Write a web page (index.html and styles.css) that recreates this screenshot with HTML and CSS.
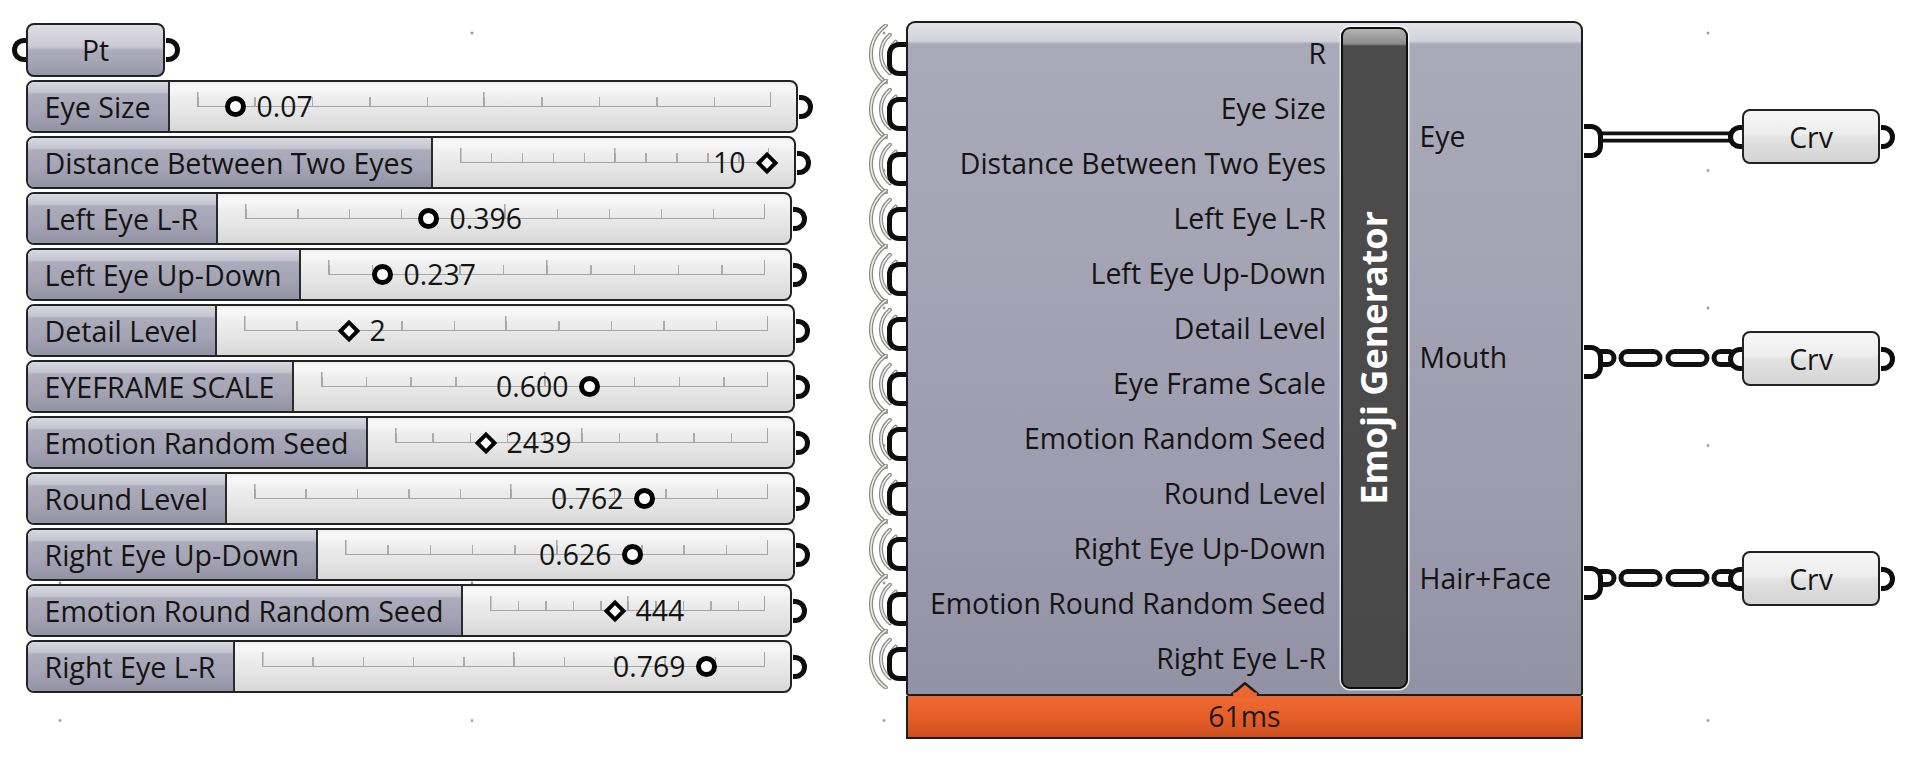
FILE: index.html
```html
<!DOCTYPE html>
<html>
<head>
<meta charset="utf-8">
<title>Emoji Generator</title>
<link rel="stylesheet" href="styles.css">
</head>
<body>
<svg class="defs" aria-hidden="true">
  <symbol id="wv" viewBox="0 0 42 60">
    <g fill="none" stroke-linecap="round">
      <path d="M19.9 1.3 A35 35 0 0 0 19.9 58.7 M23.9 10.8 A25 25 0 0 0 23.9 49.2 M29.7 17.7 A16 16 0 0 0 29.7 42.3" stroke="#8a8883" stroke-width="4"/>
      <path d="M19.9 1.3 A35 35 0 0 0 19.9 58.7 M23.9 10.8 A25 25 0 0 0 23.9 49.2 M29.7 17.7 A16 16 0 0 0 29.7 42.3" stroke="#efeee9" stroke-width="1.6"/>
    </g>
  </symbol>
</svg>
<div class="canvas">
  <div class="params">
    <div class="pt-node"><span class="port port-in"></span>Pt<span class="port port-out"></span></div>

    <div class="slider len-a"><div class="s-label">Eye Size</div><div class="s-rail"><div class="track"></div></div>
      <div class="thumb" style="left:207.5px"><span class="knob round"></span><span class="val after">0.07</span></div><span class="port port-out"></span></div>

    <div class="slider len-b"><div class="s-label">Distance Between Two Eyes</div><div class="s-rail"><div class="track"></div></div>
      <div class="thumb" style="left:738.5px"><span class="knob diamond"></span><span class="val before">10</span></div><span class="port port-out"></span></div>

    <div class="slider len-c"><div class="s-label">Left Eye L-R</div><div class="s-rail"><div class="track"></div></div>
      <div class="thumb" style="left:400.5px"><span class="knob round"></span><span class="val after">0.396</span></div><span class="port port-out"></span></div>

    <div class="slider len-c"><div class="s-label">Left Eye Up-Down</div><div class="s-rail"><div class="track"></div></div>
      <div class="thumb" style="left:354.5px"><span class="knob round"></span><span class="val after">0.237</span></div><span class="port port-out"></span></div>

    <div class="slider len-d"><div class="s-label">Detail Level</div><div class="s-rail"><div class="track"></div></div>
      <div class="thumb" style="left:320.5px"><span class="knob diamond"></span><span class="val after">2</span></div><span class="port port-out"></span></div>

    <div class="slider len-d"><div class="s-label">EYEFRAME SCALE</div><div class="s-rail"><div class="track"></div></div>
      <div class="thumb" style="left:561.5px"><span class="knob round"></span><span class="val before">0.600</span></div><span class="port port-out"></span></div>

    <div class="slider len-d"><div class="s-label">Emotion Random Seed</div><div class="s-rail"><div class="track"></div></div>
      <div class="thumb" style="left:457.5px"><span class="knob diamond"></span><span class="val after">2439</span></div><span class="port port-out"></span></div>

    <div class="slider len-d"><div class="s-label">Round Level</div><div class="s-rail"><div class="track"></div></div>
      <div class="thumb" style="left:616.5px"><span class="knob round"></span><span class="val before">0.762</span></div><span class="port port-out"></span></div>

    <div class="slider len-d"><div class="s-label">Right Eye Up-Down</div><div class="s-rail"><div class="track"></div></div>
      <div class="thumb" style="left:604.5px"><span class="knob round"></span><span class="val before">0.626</span></div><span class="port port-out"></span></div>

    <div class="slider len-c"><div class="s-label">Emotion Round Random Seed</div><div class="s-rail"><div class="track"></div></div>
      <div class="thumb" style="left:586.5px"><span class="knob diamond"></span><span class="val after">444</span></div><span class="port port-out"></span></div>

    <div class="slider len-c"><div class="s-label">Right Eye L-R</div><div class="s-rail"><div class="track"></div></div>
      <div class="thumb" style="left:678.5px"><span class="knob round"></span><span class="val before">0.769</span></div><span class="port port-out"></span></div>
  </div>

  <div class="component">
    <div class="comp-body">
      <div class="inputs">
        <div class="in"><svg class="waves"><use href="#wv"/></svg>R</div>
        <div class="in"><svg class="waves"><use href="#wv"/></svg>Eye Size</div>
        <div class="in"><svg class="waves"><use href="#wv"/></svg>Distance Between Two Eyes</div>
        <div class="in"><svg class="waves"><use href="#wv"/></svg>Left Eye L-R</div>
        <div class="in"><svg class="waves"><use href="#wv"/></svg>Left Eye Up-Down</div>
        <div class="in"><svg class="waves"><use href="#wv"/></svg>Detail Level</div>
        <div class="in"><svg class="waves"><use href="#wv"/></svg>Eye Frame Scale</div>
        <div class="in"><svg class="waves"><use href="#wv"/></svg>Emotion Random Seed</div>
        <div class="in"><svg class="waves"><use href="#wv"/></svg>Round Level</div>
        <div class="in"><svg class="waves"><use href="#wv"/></svg>Right Eye Up-Down</div>
        <div class="in"><svg class="waves"><use href="#wv"/></svg>Emotion Round Random Seed</div>
        <div class="in"><svg class="waves"><use href="#wv"/></svg>Right Eye L-R</div>
      </div>
      <div class="title-bar"><span class="title-text">Emoji Generator</span></div>
      <div class="outputs">
        <div class="out">Eye</div>
        <div class="out">Mouth</div>
        <div class="out">Hair+Face</div>
      </div>
    </div>
    <div class="timing">
      <svg class="notch" viewBox="0 0 28 16"><polygon points="0,12.75 14,1.2 28,12.75" fill="#ec6631" stroke="#1c1c1c" stroke-width="2.5" stroke-linejoin="miter"/><rect x="2.2" y="10.6" width="23.6" height="5.4" fill="#ec6631"/></svg>
      61ms
    </div>
  </div>

  <svg class="wires" viewBox="1583 0 160 765">
    <line x1="1592" y1="137" x2="1736" y2="137" stroke="#111" stroke-width="11"/>
    <line x1="1590" y1="137" x2="1738" y2="137" stroke="#fff" stroke-width="3.4"/>
    <g fill="#fff" stroke="#111" stroke-width="5">
      <rect x="1592" y="351.5" width="22" height="13" rx="6.5"/>
      <rect x="1621" y="351.5" width="39" height="13" rx="6.5"/>
      <rect x="1668" y="351.5" width="39" height="13" rx="6.5"/>
      <rect x="1714" y="351.5" width="22" height="13" rx="6.5"/>
      <rect x="1592" y="571.5" width="22" height="13" rx="6.5"/>
      <rect x="1621" y="571.5" width="39" height="13" rx="6.5"/>
      <rect x="1668" y="571.5" width="39" height="13" rx="6.5"/>
      <rect x="1714" y="571.5" width="22" height="13" rx="6.5"/>
    </g>
  </svg>

  <div class="crv crv-eye"><span class="port port-in"></span>Crv<span class="port port-out"></span></div>
  <div class="crv crv-mouth"><span class="port port-in"></span>Crv<span class="port port-out"></span></div>
  <div class="crv crv-hair"><span class="port port-in"></span>Crv<span class="port port-out"></span></div>
</div>
</body>
</html>
```

FILE: styles.css
```css
* { box-sizing: border-box; }
html, body { margin: 0; padding: 0; }
body {
  width: 1920px;
  height: 765px;
  overflow: hidden;
  background-color: #fff;
  background-image: radial-gradient(circle, #9a9a9a 0 1.3px, transparent 1.7px);
  background-size: 412px 137.5px;
  background-position: -146px -35.75px;
  font-family: "Open Sans", "Noto Sans", sans-serif;
  font-size: 28.4px;
  color: #141414;
}
.defs { position: absolute; width: 0; height: 0; overflow: hidden; }
.canvas { position: relative; width: 1920px; height: 765px; }

/* ports */
.port {
  position: absolute;
  top: 50%;
  width: 14px;
  height: 24px;
  margin-top: -12px;
  border: 5px solid #0d0d0d;
  background: #fff;
  z-index: 2;
}
.port-out { left: calc(100% + 2.5px); border-left: 0; border-radius: 0 12px 12px 0; }
.port-in { right: calc(100% + 2.5px); border-right: 0; border-radius: 12px 0 0 12px; }

/* left column of parameters */
.params {
  position: absolute;
  left: 26px;
  top: 23px;
  display: flex;
  flex-direction: column;
  align-items: flex-start;
  gap: 3px;
}
.pt-node {
  position: relative;
  width: 139px;
  height: 54px;
  border: 2.5px solid #222;
  border-radius: 8px;
  display: flex;
  align-items: center;
  justify-content: center;
  background: linear-gradient(#dedee6 0%, #c9c8d4 44%, #aeadbd 50%, #a3a2b3 80%, #9897a9 100%);
}

.slider {
  position: relative;
  display: flex;
  height: 53px;
  border: 2.5px solid #232323;
  border-radius: 8px;
  background: linear-gradient(#eeeeee 0%, #f8f8f8 10%, #ededed 35%, #e6e6e6 60%, #d8d8d8 100%);
}
.len-a { width: 772px; }
.len-b { width: 770px; }
.len-c { width: 766px; }
.len-d { width: 769px; }

.s-label {
  display: flex;
  align-items: center;
  padding: 0 17.5px 0 16.5px;
  border-right: 2.5px solid #2b2b2b;
  border-radius: 6px 0 0 6px;
  white-space: nowrap;
  font-size: 28.6px;
  background: linear-gradient(#d8d8e1 0%, #c6c5d1 20%, #acabbb 26%, #a5a4b5 60%, #9392a5 100%);
}
.s-rail { flex: 1; position: relative; }
.track {
  position: absolute;
  left: 27px;
  right: 25px;
  top: 10px;
  height: 15px;
  background:
    linear-gradient(#a6a6a6, #a6a6a6) left bottom / 100% 1.5px no-repeat,
    linear-gradient(#a6a6a6, #a6a6a6) left bottom / 1.5px 15px no-repeat,
    linear-gradient(#a6a6a6, #a6a6a6) 50% bottom / 1.5px 15px no-repeat,
    linear-gradient(#a6a6a6, #a6a6a6) right bottom / 1.5px 15px no-repeat,
    repeating-linear-gradient(90deg, #acacac 0 1.5px, transparent 1.5px 10%) left bottom / 100% 10px no-repeat;
}
.thumb { position: absolute; top: 50%; width: 0; height: 0; }
.knob { position: absolute; background: #fff; }
.knob.round {
  width: 21px; height: 21px; left: -10.5px; top: -10.5px;
  border: 5.5px solid #000; border-radius: 50%;
}
.knob.diamond {
  width: 16px; height: 16px; left: -8px; top: -8px;
  border: 4px solid #000; transform: rotate(45deg);
}
.val {
  position: absolute;
  top: 0;
  line-height: 1;
  transform: translateY(-53%);
  white-space: nowrap;
}
.val.after { left: 21px; }
.val.before { right: 21px; }

/* main component */
.component { position: absolute; left: 906px; top: 21px; width: 677px; }
.comp-body {
  position: relative;
  height: 675px;
  display: flex;
  border: 2.5px solid #1c1c1c;
  border-radius: 9px 9px 3px 3px;
  background: linear-gradient(#e2e2e8 0px, #d2d2da 18px, #aaa9b9 21px, #a6a5b6 30%, #9c9bae 75%, #9392a5 100%);
}
.inputs {
  width: 430px;
  padding: 3px 12px 0 0;
  display: flex;
  flex-direction: column;
  text-align: right;
}
.in { position: relative; height: 55px; line-height: 55px; white-space: nowrap; }
.in::before {
  content: "";
  position: absolute;
  top: 50%;
  right: calc(100% + 2.5px);
  width: 14px;
  height: 24px;
  margin-top: -12px;
  border: 5px solid #0d0d0d;
  border-right: 0;
  border-radius: 12px 0 0 12px;
  background: #fff;
  z-index: 2;
}
.waves {
  position: absolute;
  left: -42.5px;
  top: -2.5px;
  width: 42px;
  height: 60px;
  overflow: visible;
}
.title-bar {
  width: 67px;
  margin: 3.5px 0 5px 2.5px;
  border: 2.5px solid #0e0e0e;
  border-radius: 9px;
  box-shadow: 0 0 0 1.5px rgba(255,255,255,0.75);
  background: linear-gradient(#b4b4b4 0px, #8c8c8c 15px, #4c4c4c 17px, #494949 100%);
  display: flex;
  align-items: center;
  justify-content: center;
}
.title-text {
  writing-mode: vertical-rl;
  transform: rotate(180deg);
  color: #fff;
  font-weight: 700;
  font-size: 36px;
  white-space: nowrap;
  line-height: 1;
}
.outputs {
  flex: 1;
  display: flex;
  flex-direction: column;
  padding: 3px 0 5.5px;
}
.out {
  position: relative;
  flex: 1;
  display: flex;
  align-items: center;
  padding-left: 12px;
}
.out::after {
  content: "";
  position: absolute;
  top: 50%;
  left: calc(100% + 2.5px);
  width: 14px;
  height: 24px;
  margin-top: -12px;
  border: 5px solid #0d0d0d;
  border-left: 0;
  border-radius: 0 12px 12px 0;
  background: #fff;
  z-index: 2;
}
.timing {
  position: relative;
  height: 43px;
  border: 2.5px solid #1c1c1c;
  border-top: 0;
  background: linear-gradient(#ef6b33 0%, #e65e2a 50%, #cf4f1f 100%);
  text-align: center;
  line-height: 40px;
  color: #1a1a1a;
}
.notch {
  position: absolute;
  left: 50%;
  top: -14px;
  width: 28px;
  height: 16px;
  margin-left: -14px;
}

/* wires */
.wires { position: absolute; left: 1583px; top: 0; width: 160px; height: 765px; }

/* Crv nodes */
.crv {
  position: absolute;
  left: 1742px;
  width: 138px;
  height: 55px;
  border: 2.5px solid #222;
  border-radius: 8px;
  display: flex;
  align-items: center;
  justify-content: center;
  background: linear-gradient(#f6f6f6 0%, #eeeeee 44%, #e2e2e2 52%, #d4d4d4 100%);
}
.crv-eye { top: 109px; }
.crv-mouth { top: 331px; }
.crv-hair { top: 551px; }
```
